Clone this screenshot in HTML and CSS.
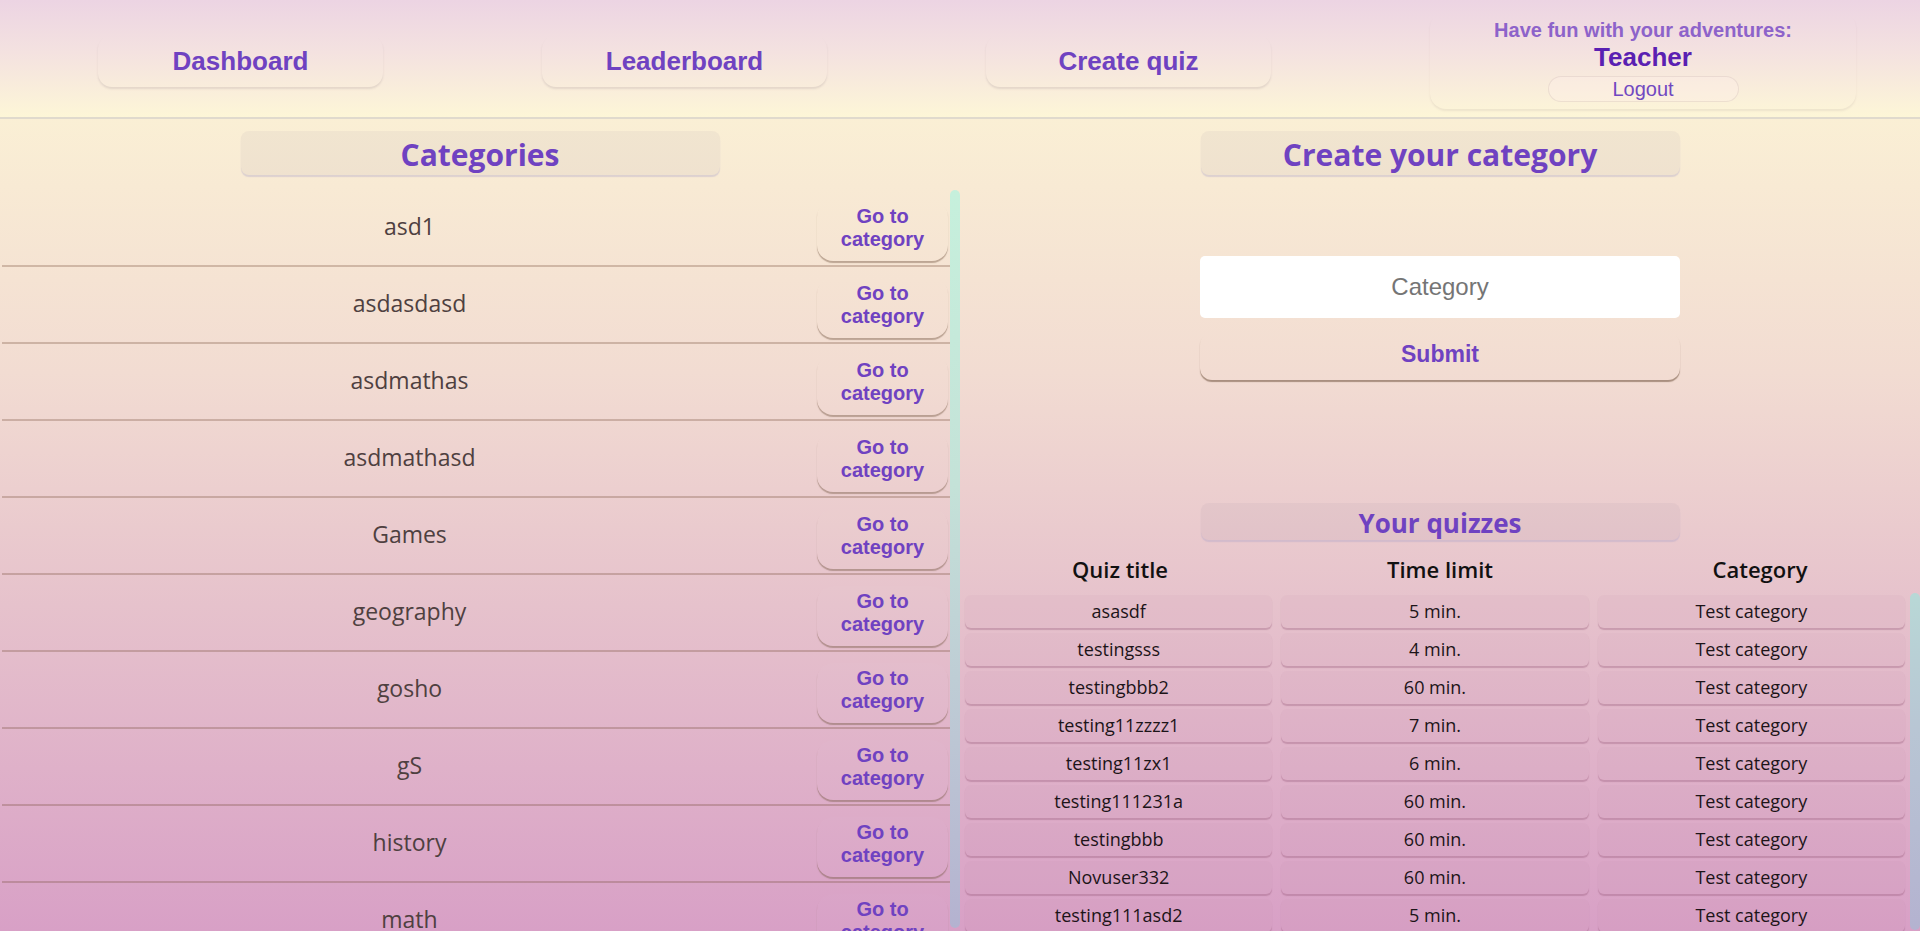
FILE: index.html
```html
<!DOCTYPE html>
<html lang="en">
<head>
<meta charset="utf-8">
<title>Quiz - Create category</title>
<link rel="stylesheet" href="styles.css">
</head>
<body>
<header class="topbar">
  <a class="nav-btn">Dashboard</a>
  <a class="nav-btn">Leaderboard</a>
  <a class="nav-btn">Create quiz</a>
  <div class="user-box">
    <div class="greet">Have fun with your adventures:</div>
    <div class="username">Teacher</div>
    <button class="logout">Logout</button>
  </div>
</header>
<main class="main">
  <section class="col col-left">
    <h2 class="title-box">Categories</h2>
    <div class="scroll-pane">
      <div class="cat-list">
        <div class="cat-row"><span class="cat-name">asd1</span><button class="go-btn">Go to<br>category</button></div>
        <div class="cat-row"><span class="cat-name">asdasdasd</span><button class="go-btn">Go to<br>category</button></div>
        <div class="cat-row"><span class="cat-name">asdmathas</span><button class="go-btn">Go to<br>category</button></div>
        <div class="cat-row"><span class="cat-name">asdmathasd</span><button class="go-btn">Go to<br>category</button></div>
        <div class="cat-row"><span class="cat-name">Games</span><button class="go-btn">Go to<br>category</button></div>
        <div class="cat-row"><span class="cat-name">geography</span><button class="go-btn">Go to<br>category</button></div>
        <div class="cat-row"><span class="cat-name">gosho</span><button class="go-btn">Go to<br>category</button></div>
        <div class="cat-row"><span class="cat-name">gS</span><button class="go-btn">Go to<br>category</button></div>
        <div class="cat-row"><span class="cat-name">history</span><button class="go-btn">Go to<br>category</button></div>
        <div class="cat-row"><span class="cat-name">math</span><button class="go-btn">Go to<br>category</button></div>
      </div>
      <div class="scrollbar"><div class="thumb thumb-left"></div></div>
    </div>
  </section>
  <section class="col col-right">
    <h2 class="title-box">Create your category</h2>
    <form class="create-form">
      <input class="cat-input" type="text" placeholder="Category">
      <button class="submit-btn" type="button">Submit</button>
    </form>
    <h3 class="title-box title-small">Your quizzes</h3>
    <div class="quiz-head">
      <span>Quiz title</span><span>Time limit</span><span>Category</span>
    </div>
    <div class="scroll-pane quiz-pane">
      <div class="quiz-grid">
        <div class="cell">asasdf</div><div class="cell">5 min.</div><div class="cell">Test category</div>
        <div class="cell">testingsss</div><div class="cell">4 min.</div><div class="cell">Test category</div>
        <div class="cell">testingbbb2</div><div class="cell">60 min.</div><div class="cell">Test category</div>
        <div class="cell">testing11zzzz1</div><div class="cell">7 min.</div><div class="cell">Test category</div>
        <div class="cell">testing11zx1</div><div class="cell">6 min.</div><div class="cell">Test category</div>
        <div class="cell">testing111231a</div><div class="cell">60 min.</div><div class="cell">Test category</div>
        <div class="cell">testingbbb</div><div class="cell">60 min.</div><div class="cell">Test category</div>
        <div class="cell">Novuser332</div><div class="cell">60 min.</div><div class="cell">Test category</div>
        <div class="cell">testing111asd2</div><div class="cell">5 min.</div><div class="cell">Test category</div>
        <div class="cell">testing111asd</div><div class="cell">5 min.</div><div class="cell">Test category</div>
      </div>
      <div class="scrollbar"><div class="thumb thumb-right"></div></div>
    </div>
  </section>
</main>
</body>
</html>
```
FILE: styles.css
```css
html, body {
  margin: 0;
  padding: 0;
  height: 100%;
  overflow: hidden;
}
body {
  font-family: "Open Sans", "Liberation Sans", sans-serif;
  background: linear-gradient(180deg, #fef8d6 0%, #f2dcd2 40%, #e6c2cc 65%, #d8a0c6 100%);
}

/* ---------- top bar ---------- */
.topbar {
  height: 117px;
  border-bottom: 2px solid #e0dacd;
  background: linear-gradient(180deg, #ecd4e3 0%, #f4e2e0 45%, #fdf6d7 100%);
  display: flex;
  align-items: flex-start;
  padding-left: 98px;
  gap: 159px;
  box-sizing: content-box;
}
.nav-btn {
  width: 285px;
  height: 52px;
  margin-top: 35px;
  box-sizing: border-box;
  padding-top: 11px;
  text-align: center;
  font-family: "Liberation Sans", Arial, sans-serif;
  font-weight: 700;
  font-size: 26px;
  line-height: 30px;
  color: #6f42c1;
  border-radius: 14px;
  background: rgba(255, 255, 255, 0.02);
  box-shadow: 0 2px 2px rgba(120, 100, 110, 0.16);
  cursor: pointer;
}
.user-box {
  width: 426px;
  height: 97px;
  margin-top: 12px;
  box-sizing: border-box;
  padding-top: 6px;
  display: flex;
  flex-direction: column;
  align-items: center;
  font-family: "Liberation Sans", Arial, sans-serif;
  border-radius: 16px;
  background: rgba(255, 255, 255, 0.02);
  box-shadow: 0 2px 2px rgba(120, 100, 110, 0.1);
}
.greet {
  font-size: 20px;
  line-height: 24px;
  font-weight: 700;
  color: #8d63ca;
}
.username {
  font-size: 26px;
  line-height: 31px;
  font-weight: 700;
  color: #5a20b2;
}
.logout {
  margin-top: 3px;
  width: 191px;
  height: 26px;
  padding: 0;
  font-family: "Liberation Sans", Arial, sans-serif;
  font-size: 20px;
  line-height: 24px;
  color: #7149c1;
  background: rgba(255, 240, 235, 0.3);
  border: 1px solid rgba(150, 120, 120, 0.15);
  border-radius: 13px;
}

/* ---------- main ---------- */
.main {
  display: grid;
  grid-template-columns: 960px 960px;
  height: 838px;
}
.col {
  display: flex;
  flex-direction: column;
  align-items: center;
  padding-top: 12px;
  min-height: 0;
  box-sizing: border-box;
  height: 838px;
}
.title-box {
  width: 479px;
  height: 44px;
  margin: 0;
  padding-top: 4px;
  box-sizing: border-box;
  text-align: center;
  font-family: "Open Sans", sans-serif;
  font-weight: 700;
  font-size: 30px;
  line-height: 40px;
  color: #6f42c1;
  border-radius: 8px;
  background: rgba(130, 110, 140, 0.07);
  box-shadow: 0 2px 1px rgba(170, 160, 200, 0.35);
}
.title-small {
  height: 37px;
  padding-top: 4px;
  font-size: 26px;
  line-height: 33px;
  margin-top: 123px;
}

/* ---------- scroll panes (custom scrollbar drawn in flow) ---------- */
.scroll-pane {
  flex: 1;
  min-height: 0;
  width: 960px;
  display: flex;
  overflow: hidden;
}
.scrollbar {
  width: 10px;
  flex: none;
  display: flex;
  flex-direction: column;
}
.thumb {
  width: 10px;
  border-radius: 5px;
}
.thumb-left {
  height: 738px;
  background: linear-gradient(180deg, #c6f0dc 0%, #c4e2d8 40%, #bcc6d4 75%, #b4b2d0 100%);
}
.thumb-right {
  margin-top: 3px;
  height: 337px;
  background: linear-gradient(180deg, #b8d8d6 0%, #b8c6d4 40%, #b4b2d0 100%);
}

/* ---------- categories list ---------- */
.col-left .title-box {
  margin-bottom: 15px;
}
.cat-list {
  flex: 1;
  min-width: 0;
}
.cat-row {
  height: 77px;
  box-sizing: border-box;
  margin-left: 2px;
  display: flex;
  align-items: center;
  border-bottom: 2px solid rgba(120, 80, 60, 0.3);
}
.cat-name {
  flex: 1;
  text-align: center;
  font-size: 23px;
  color: #4e4040;
  padding-bottom: 4px;
}
.go-btn {
  width: 131px;
  height: 60px;
  margin-right: 2px;
  margin-top: 6px;
  padding: 0 0 5px;
  font-family: "Liberation Sans", Arial, sans-serif;
  font-weight: 700;
  font-size: 20px;
  line-height: 23px;
  color: #6f42c1;
  border: none;
  border-radius: 16px;
  background: rgba(255, 255, 255, 0.02);
  box-shadow: 0 2px 1px rgba(120, 90, 70, 0.45);
  cursor: pointer;
}

/* ---------- create form ---------- */
.create-form {
  display: flex;
  flex-direction: column;
  width: 480px;
  margin: 81px 0 0;
}
.cat-input {
  height: 62px;
  box-sizing: border-box;
  border: none;
  border-radius: 5px;
  background: #fff;
  text-align: center;
  font-family: "Liberation Sans", Arial, sans-serif;
  font-size: 24px;
  color: #333;
  outline: none;
}
.cat-input::placeholder {
  color: #757575;
}
.submit-btn {
  margin-top: 15px;
  height: 47px;
  padding: 0;
  padding-bottom: 4px;
  font-family: "Liberation Sans", Arial, sans-serif;
  font-weight: 700;
  font-size: 23px;
  color: #6f42c1;
  border: none;
  border-radius: 12px;
  background: rgba(255, 255, 255, 0.02);
  box-shadow: 0 2px 1px rgba(110, 80, 60, 0.55);
}

/* ---------- quizzes table ---------- */
.quiz-head {
  width: 960px;
  display: grid;
  grid-template-columns: repeat(3, 1fr);
  margin-top: 8px;
  height: 42px;
  align-items: center;
  text-align: center;
  font-weight: 600;
  font-size: 22px;
  color: #111;
}
.quiz-grid {
  flex: 1;
  min-width: 0;
  align-self: flex-start;
  display: grid;
  grid-template-columns: repeat(3, 1fr);
  column-gap: 9px;
  row-gap: 5px;
  padding: 5px 5px 0;
}
.cell {
  height: 33px;
  line-height: 33px;
  text-align: center;
  font-size: 18px;
  color: #1c1418;
  border-radius: 6px;
  background: rgba(190, 140, 170, 0.08);
  box-shadow: 0 2px 1px rgba(150, 90, 120, 0.35);
}
```
